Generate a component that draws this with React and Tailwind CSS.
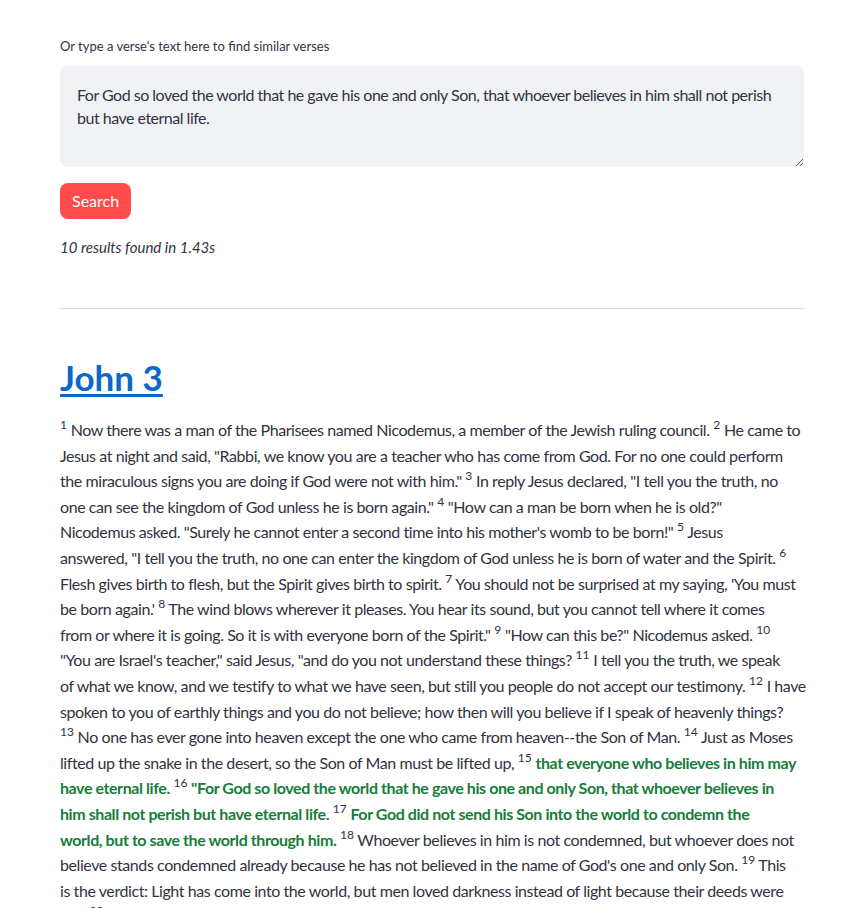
import React from "react";

const F = { fontFamily: "Lato, 'Noto Sans', sans-serif" };

function V({ n }) {
  return <sup className="text-[12px] top-[-7px] tracking-normal">{n}</sup>;
}
function G({ children }) {
  return <span className="font-bold text-[#177d3a]">{children}</span>;
}

const lines = [
  <><V n="1" /> Now there was a man of the Pharisees named Nicodemus, a member of the Jewish ruling council. <V n="2" /> He came to</>,
  <>Jesus at night and said, "Rabbi, we know you are a teacher who has come from God. For no one could perform</>,
  <>the miraculous signs you are doing if God were not with him." <V n="3" /> In reply Jesus declared, "I tell you the truth, no</>,
  <>one can see the kingdom of God unless he is born again." <V n="4" /> "How can a man be born when he is old?"</>,
  <>Nicodemus asked. "Surely he cannot enter a second time into his mother's womb to be born!" <V n="5" /> Jesus</>,
  <>answered, "I tell you the truth, no one can enter the kingdom of God unless he is born of water and the Spirit. <V n="6" /></>,
  <>Flesh gives birth to flesh, but the Spirit gives birth to spirit. <V n="7" /> You should not be surprised at my saying, 'You must</>,
  <>be born again.' <V n="8" /> The wind blows wherever it pleases. You hear its sound, but you cannot tell where it comes</>,
  <>from or where it is going. So it is with everyone born of the Spirit." <V n="9" /> "How can this be?" Nicodemus asked. <V n="10" /></>,
  <>"You are Israel's teacher," said Jesus, "and do you not understand these things? <V n="11" /> I tell you the truth, we speak</>,
  <>of what we know, and we testify to what we have seen, but still you people do not accept our testimony. <V n="12" /> I have</>,
  <>spoken to you of earthly things and you do not believe; how then will you believe if I speak of heavenly things?</>,
  <><V n="13" /> No one has ever gone into heaven except the one who came from heaven--the Son of Man. <V n="14" /> Just as Moses</>,
  <>lifted up the snake in the desert, so the Son of Man must be lifted up, <V n="15" /> <G>that everyone who believes in him may</G></>,
  <><G>have eternal life.</G> <V n="16" /> <G>"For God so loved the world that he gave his one and only Son, that whoever believes in</G></>,
  <><G>him shall not perish but have eternal life.</G> <V n="17" /> <G>For God did not send his Son into the world to condemn the</G></>,
  <><G>world, but to save the world through him.</G> <V n="18" /> Whoever believes in him is not condemned, but whoever does not</>,
  <>believe stands condemned already because he has not believed in the name of God's one and only Son. <V n="19" /> This</>,
  <>is the verdict: Light has come into the world, but men loved darkness instead of light because their deeds were</>,
  <>evil. <V n="20" /> Everyone who does evil hates the light, and will not come into the light for fear that his deeds</>,
];

export default function App() {
  return (
    <div className="min-h-screen bg-white text-[#31333f] flex justify-start px-[60px] pt-[38px]" style={F}>
      <div className="w-[744px] flex flex-col">
        <div className="flex flex-col gap-[12px]">
          <label className="text-[13px] leading-[16px]">
            Or type a verse's text here to find similar verses
          </label>
          <textarea
            className="w-full h-[101px] resize-y rounded-lg bg-[#f0f2f6] pl-[17px] pr-[12px] pt-[17px] text-[16px] leading-[23px] tracking-[-0.5px] outline-none text-[#31333f]"
            style={F}
            defaultValue="For God so loved the world that he gave his one and only Son, that whoever believes in him shall not perish but have eternal life."
          />
        </div>
        <div className="flex flex-col items-start gap-[18px] pt-[16px]">
          <button className="h-[36px] px-[12px] rounded-lg bg-[#ff4b4b] text-white text-[16px] leading-none" style={F}>
            Search
          </button>
          <p className="italic text-[15px] leading-[20px]">10 results found in 1.43s</p>
        </div>
        <hr className="mt-[51px] border-t border-[#dcdcde]" />
        <h2 className="mt-[46px] text-[35px] leading-[44px] font-bold">
          <a href="#" className="text-[#0a68c8] underline decoration-[3px] underline-offset-[3px]">John 3</a>
        </h2>
        <p className="mt-[18px] text-[16px] leading-[25.6px] whitespace-nowrap tracking-[-0.42px]">
          {lines.map((l, i) => (
            <React.Fragment key={i}>
              {l}
              {i < lines.length - 1 && <br />}
            </React.Fragment>
          ))}
        </p>
      </div>
    </div>
  );
}
